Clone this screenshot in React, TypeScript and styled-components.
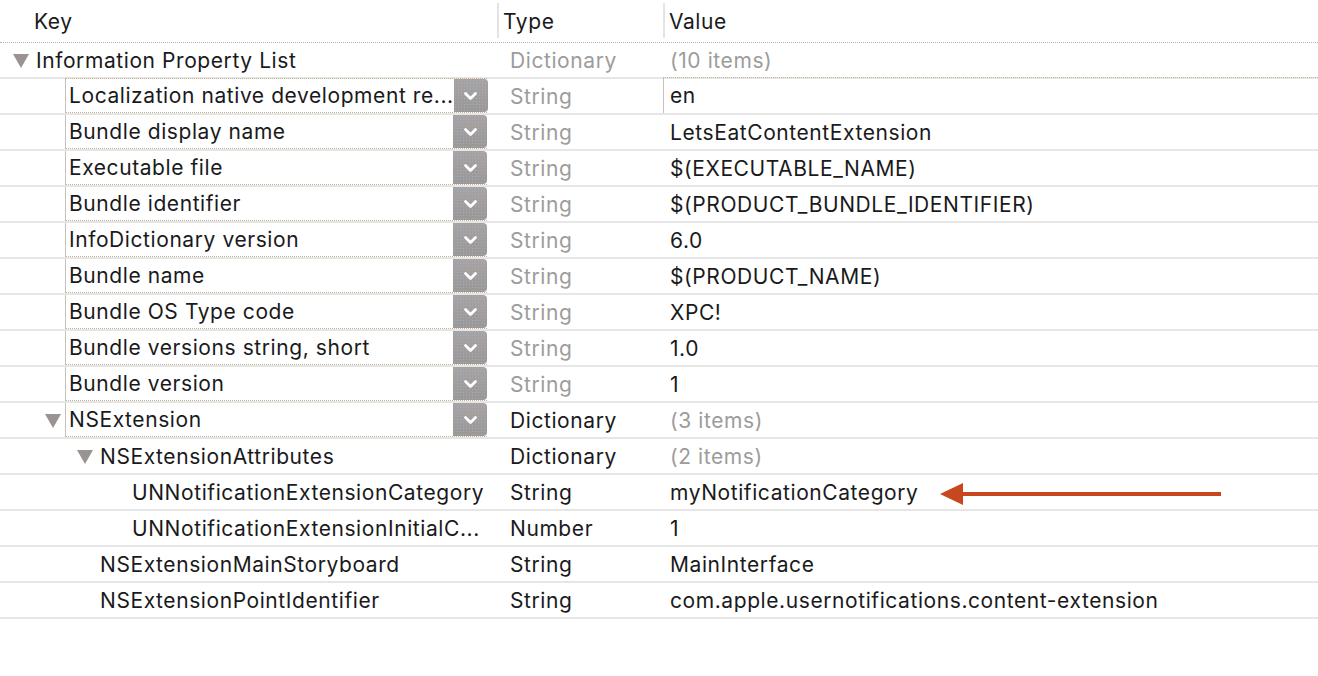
import React from "react";
import styled, { createGlobalStyle, css } from "styled-components";

const Global = createGlobalStyle`
  html, body { margin: 0; padding: 0; background: #ffffff; }
  body { font-family: Inter, "Noto Sans", "Liberation Sans", sans-serif; }
`;

const Page = styled.div`
  position: relative;
  width: 1318px;
  height: 676px;
  background: #fff;
  overflow: hidden;
  font-size: 21px;
  letter-spacing: 0.58px;
  color: #1a1a1c;
`;

const Header = styled.div`
  display: grid;
  grid-template-columns: 497px 166px 1fr;
  height: 42px;
  border-bottom: 1px dotted #b5b5b5;
`;

const HeadCell = styled.div<{ $sep?: boolean; $pad: number }>`
  display: flex;
  align-items: center;
  padding-left: ${(p) => p.$pad}px;
  position: relative;
  ${(p) =>
    p.$sep &&
    css`
      &::before {
        content: "";
        position: absolute;
        left: 0;
        top: 3px;
        bottom: 4px;
        width: 2px;
        background: #e4e4e4;
      }
    `}
`;

const Row = styled.div`
  display: grid;
  grid-template-columns: 497px 166px 1fr;
  height: 34px;
  border-bottom: 2px solid #e6e6e6;
`;

const KeyCell = styled.div<{ $level: number }>`
  display: flex;
  align-items: stretch;
  padding-left: ${(p) => p.$level * 32}px;
  padding-right: 10px;
  min-width: 0;
`;

const Slot = styled.div`
  flex: 0 0 33px;
  display: flex;
  align-items: center;
  padding-left: 13px;
  box-sizing: border-box;
`;

const Triangle = styled.span`
  display: block;
  width: 0;
  height: 0;
  border-left: 8px solid transparent;
  border-right: 8px solid transparent;
  border-top: 14px solid #9b9391;
  margin-top: 2px;
`;

const KeyField = styled.div<{ $boxed?: boolean; $first?: boolean }>`
  flex: ${(p) => (p.$boxed ? "1" : "0 1 auto")};
  display: flex;
  align-items: center;
  padding-left: 3px;
  min-width: 0;
  ${(p) =>
    p.$boxed &&
    css`
      border-left: 1px solid #c7c1bc;
      border-bottom: 1px dotted #c9b597;
      ${p.$first ? "border-top: 1px dotted #c9b597; margin-top: -1px;" : ""}
    `}
`;

const KeyText = styled.span`
  flex: 1;
  white-space: nowrap;
`;

const Popup = styled.div`
  flex: 0 0 34px;
  align-self: stretch;
  display: flex;
  align-items: center;
  justify-content: center;
  border-radius: 0 4px 4px 0;
  background:
    radial-gradient(circle, rgba(140, 185, 235, 0.75) 0.7px, transparent 1px) 0 0 / 3px 3px,
    linear-gradient(#a9a29f, #9d9794);
`;

const TypeCell = styled.div<{ $dim?: boolean }>`
  display: flex;
  align-items: center;
  padding-left: 13px;
  color: ${(p) => (p.$dim ? "#9c9c9c" : "#1a1a1c")};
`;

const ValueCell = styled.div<{ $dim?: boolean; $editing?: boolean }>`
  display: flex;
  align-items: center;
  padding-left: 7px;
  white-space: nowrap;
  color: ${(p) => (p.$dim ? "#9c9c9c" : "#1a1a1c")};
  ${(p) =>
    p.$editing &&
    css`
      border-left: 1px solid #c7c1bc;
      border-top: 1px dotted #c9b597;
      margin-top: -2px;
      padding-left: 6px;
    `}
`;

const ArrowLayer = styled.svg`
  position: absolute;
  left: 938px;
  top: 481px;
`;

type RowData = {
  key: string;
  level: number;
  toggle?: boolean;
  popup?: boolean;
  type: string;
  value: string;
  dimType?: boolean;
  dimValue?: boolean;
  editing?: boolean;
};

const rows: RowData[] = [
  { key: "Information Property List", level: 0, toggle: true, type: "Dictionary", value: "(10 items)", dimType: true, dimValue: true },
  { key: "Localization native development re...", level: 1, popup: true, type: "String", value: "en", dimType: true, editing: true },
  { key: "Bundle display name", level: 1, popup: true, type: "String", value: "LetsEatContentExtension", dimType: true },
  { key: "Executable file", level: 1, popup: true, type: "String", value: "$(EXECUTABLE_NAME)", dimType: true },
  { key: "Bundle identifier", level: 1, popup: true, type: "String", value: "$(PRODUCT_BUNDLE_IDENTIFIER)", dimType: true },
  { key: "InfoDictionary version", level: 1, popup: true, type: "String", value: "6.0", dimType: true },
  { key: "Bundle name", level: 1, popup: true, type: "String", value: "$(PRODUCT_NAME)", dimType: true },
  { key: "Bundle OS Type code", level: 1, popup: true, type: "String", value: "XPC!", dimType: true },
  { key: "Bundle versions string, short", level: 1, popup: true, type: "String", value: "1.0", dimType: true },
  { key: "Bundle version", level: 1, popup: true, type: "String", value: "1", dimType: true },
  { key: "NSExtension", level: 1, toggle: true, popup: true, type: "Dictionary", value: "(3 items)", dimValue: true },
  { key: "NSExtensionAttributes", level: 2, toggle: true, type: "Dictionary", value: "(2 items)", dimValue: true },
  { key: "UNNotificationExtensionCategory", level: 3, type: "String", value: "myNotificationCategory" },
  { key: "UNNotificationExtensionInitialC...", level: 3, type: "Number", value: "1" },
  { key: "NSExtensionMainStoryboard", level: 2, type: "String", value: "MainInterface" },
  { key: "NSExtensionPointIdentifier", level: 2, type: "String", value: "com.apple.usernotifications.content-extension" },
];

const Chevron = () => (
  <svg width="15" height="10" viewBox="0 0 15 10">
    <path d="M2.5 2.5 L7.5 7.5 L12.5 2.5" fill="none" stroke="#fff" strokeWidth="2.8" strokeLinecap="round" strokeLinejoin="round" />
  </svg>
);

export default function App() {
  return (
    <Page>
      <Global />
      <Header>
        <HeadCell $pad={34}>Key</HeadCell>
        <HeadCell $sep $pad={6}>Type</HeadCell>
        <HeadCell $sep $pad={6}>Value</HeadCell>
      </Header>
      {rows.map((r, i) => (
        <Row key={i}>
          <KeyCell $level={r.level}>
            <Slot>{r.toggle && <Triangle />}</Slot>
            <KeyField $boxed={r.popup} $first={i === 1}>
              <KeyText>{r.key}</KeyText>
              {r.popup && (
                <Popup>
                  <Chevron />
                </Popup>
              )}
            </KeyField>
          </KeyCell>
          <TypeCell $dim={r.dimType}>{r.type}</TypeCell>
          <ValueCell $dim={r.dimValue} $editing={r.editing}>
            {r.value}
          </ValueCell>
        </Row>
      ))}
      <ArrowLayer width="290" height="28" viewBox="0 0 290 28">
        <path d="M2 13 L25 2 L25 24 Z" fill="#c7471f" />
        <rect x="22" y="11" width="261" height="4" fill="#c7471f" />
      </ArrowLayer>
    </Page>
  );
}
